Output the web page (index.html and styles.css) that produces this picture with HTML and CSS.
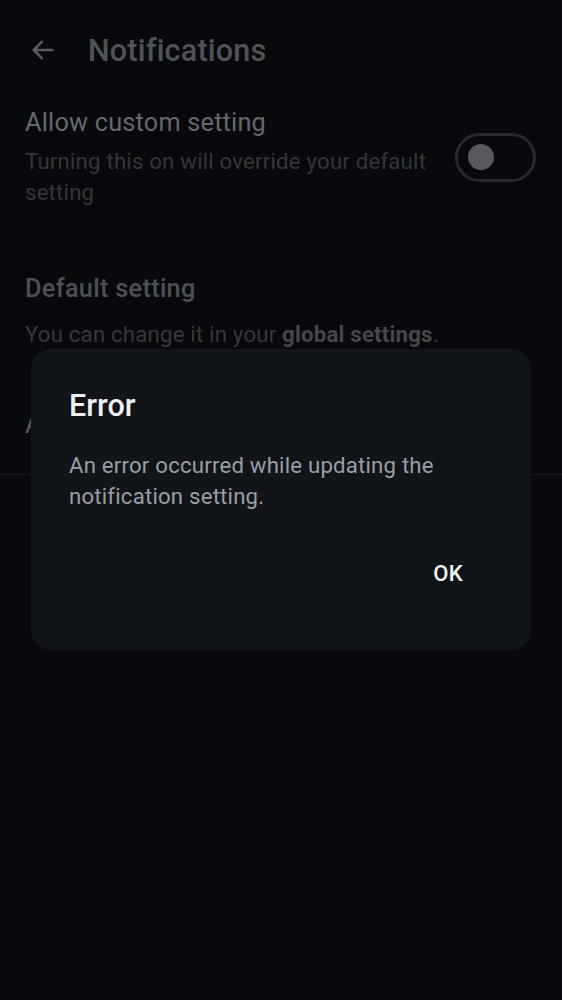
FILE: index.html
```html
<!DOCTYPE html>
<html>
<head>
<meta charset="utf-8">
<link rel="stylesheet" href="styles.css">
</head>
<body>
<div class="screen">
  <header class="topbar">
    <svg class="back" width="28" height="28" viewBox="0 0 24 24"><path d="M20 12H5M11 5l-7 7 7 7" fill="none" stroke="#5a5c60" stroke-width="2.2" stroke-linecap="round" stroke-linejoin="round"/></svg>
    <h1 class="title">Notifications</h1>
  </header>
  <section class="row">
    <div class="row-text">
      <div class="row-label">Allow custom setting</div>
      <div class="row-sub">Turning this on will override your default setting</div>
    </div>
    <div class="toggle"><span class="knob"></span></div>
  </section>
  <section class="default">
    <div class="section-title">Default setting</div>
    <div class="section-sub">You can change it in your <b>global settings</b>.</div>
  </section>
  <section class="item">
    <div class="item-label">All new posts</div>
  </section>
  <div class="divider"></div>
</div>
<div class="overlay">
  <div class="dialog">
    <h2 class="dlg-title">Error</h2>
    <p class="dlg-body">An error occurred while updating the notification setting.</p>
    <div class="dlg-actions"><button class="ok">OK</button></div>
  </div>
</div>
</body>
</html>
```
FILE: styles.css
```css
html, body { margin: 0; padding: 0; }
body {
  background: #08090c;
  font-family: Roboto, "Noto Sans", sans-serif;
  width: 562px;
  height: 1000px;
  overflow: hidden;
  position: relative;
}
.screen { display: flex; flex-direction: column; }
.topbar {
  display: flex;
  align-items: center;
  height: 100px;
  padding-left: 29px;
  box-sizing: border-box;
}
.back { margin-right: 31px; }
.title {
  margin: 0;
  font-size: 30.5px;
  font-weight: 500;
  color: #515357;
  letter-spacing: 0.2px;
}
.row {
  display: flex;
  align-items: center;
  padding: 0 25px;
  margin-top: 6px;
}
.row-text { flex: 1; }
.row-label {
  font-size: 25.3px;
  color: #66686c;
  line-height: 34px;
  letter-spacing: 0.2px;
}
.row-sub {
  margin-top: 6px;
  font-size: 22.2px;
  line-height: 31px;
  color: #34363a;
  width: 420px;
  letter-spacing: 0.2px;
}
.toggle {
  width: 81px;
  height: 49px;
  box-sizing: border-box;
  border: 3px solid #28292c;
  border-radius: 25px;
  display: flex;
  align-items: center;
  padding-left: 10px;
  margin-right: 1px;
}
.knob {
  width: 26px;
  height: 26px;
  border-radius: 50%;
  background: #58595c;
}
.default { padding: 0 25px; margin-top: 64px; }
.section-title {
  font-size: 25.3px;
  font-weight: 500;
  color: #4e5054;
  line-height: 34px;
  letter-spacing: 0.3px;
}
.section-sub {
  margin-top: 13px;
  font-size: 22.2px;
  color: #36383c;
  line-height: 30px;
  letter-spacing: 0.2px;
}
.section-sub b { font-weight: 700; color: #45474b; }
.item { padding: 0 25px; margin-top: 59px; }
.item-label {
  font-size: 25.3px;
  color: #5a5c60;
  line-height: 34px;
}
.divider {
  height: 1px;
  background: #16171a;
  margin-top: 32px;
}
.overlay {
  position: absolute;
  left: 0; top: 0;
  width: 562px;
  height: 1000px;
}
.dialog {
  position: absolute;
  left: 31px;
  top: 349px;
  width: 500px;
  height: 301px;
  box-sizing: border-box;
  background: #111418;
  border-radius: 20px;
  padding: 38px 38px 0 38px;
}
.dlg-title {
  margin: 0;
  font-size: 30.5px;
  font-weight: 500;
  color: #eef0f3;
  line-height: 38px;
}
.dlg-body {
  margin: 25px 0 0 0;
  font-size: 22.2px;
  line-height: 31px;
  color: #9a9ea5;
  letter-spacing: 0.2px;
  width: 410px;
}
.dlg-actions {
  display: flex;
  justify-content: flex-end;
  margin-top: 41px;
}
.ok {
  background: none;
  border: none;
  font-family: inherit;
  font-size: 22px;
  line-height: 26px;
  font-weight: 500;
  color: #f2f4f7;
  padding: 8px 30px 8px 30px;
  letter-spacing: 0.3px;
}
```
